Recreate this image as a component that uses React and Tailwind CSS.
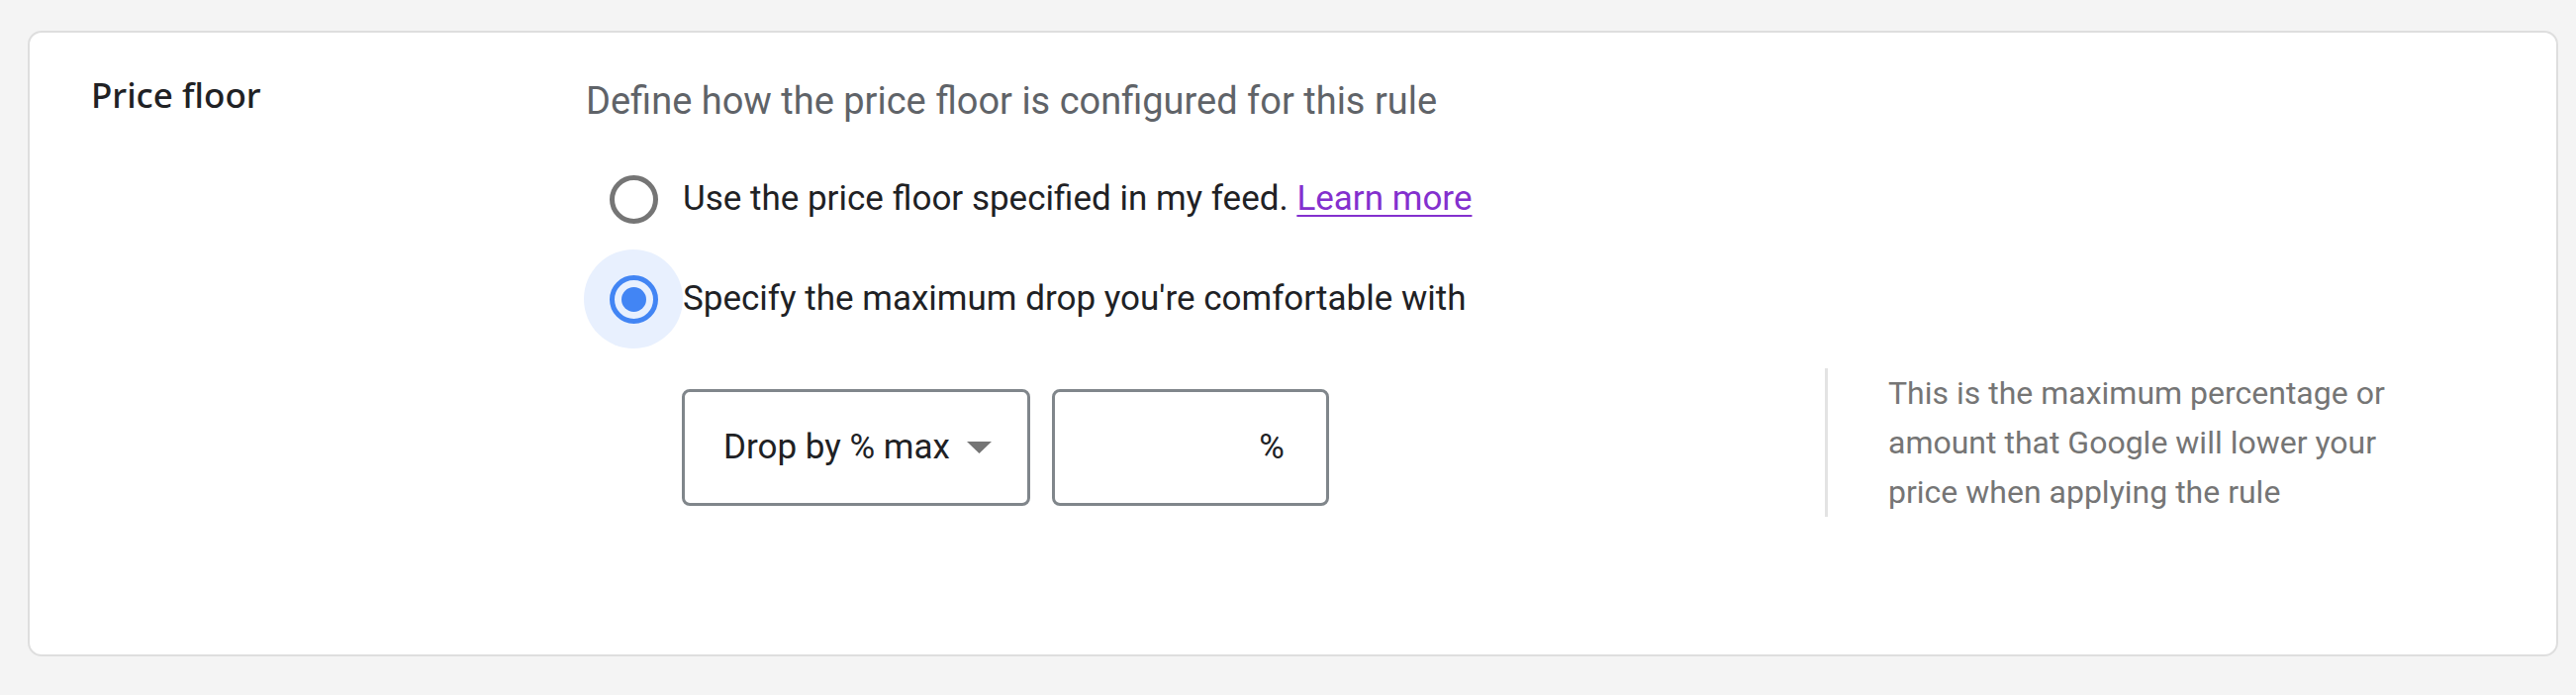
import React, { useState } from 'react';

const Radio = ({ checked, label, onClick }) => (
  <div className="flex h-[100px] items-center cursor-pointer" onClick={onClick}>
    <div
      className={`flex h-[100px] w-[100px] shrink-0 items-center justify-center rounded-full ${checked ? 'bg-[#e8f0fe]' : ''}`}
    >
      <div
        className={`flex h-[49px] w-[49px] items-center justify-center rounded-full border-[5px] ${checked ? 'border-[#4285f4]' : 'border-[#757575]'}`}
      >
        {checked && <div className="h-[25px] w-[25px] rounded-full bg-[#4285f4]" />}
      </div>
    </div>
    <div className="text-[35px] text-[#202124]">{label}</div>
  </div>
);

const App = () => {
  const [choice, setChoice] = useState('max');

  return (
    <div className="min-h-screen bg-[#f4f4f4] pl-[28px] pr-[18px] pt-[31px]" style={{ fontFamily: 'Roboto, "Liberation Sans", sans-serif' }}>
      <div className="flex h-[632px] rounded-[14px] border-2 border-[#dedede] bg-white pl-[62px] pt-[41px]">
        {/* Label column */}
        <div className="w-[500px] shrink-0">
          <div
            className="text-[35px] font-medium leading-[44px] text-[#202124]"
            style={{ fontFamily: '"Noto Sans", "Open Sans", sans-serif' }}
          >
            Price floor
          </div>
        </div>

        {/* Content column */}
        <div className="flex-1 pt-[6px]">
          <div className="text-[38px] leading-[44px] text-[#5f6368]">
            Define how the price floor is configured for this rule
          </div>

          <div className="mt-[27px] ml-[-2px] flex flex-col gap-[1px]">
            <Radio
              checked={choice === 'feed'}
              onClick={() => setChoice('feed')}
              label={
                <>
                  Use the price floor specified in my feed.{' '}
                  <a href="#" className="text-[#8430ce] underline decoration-2 underline-offset-[5px]">
                    Learn more
                  </a>
                </>
              }
            />
            <Radio
              checked={choice === 'max'}
              onClick={() => setChoice('max')}
              label="Specify the maximum drop you're comfortable with"
            />
          </div>

          <div className="mt-[20px] flex items-start pl-[97px]">
            <div className="mt-[21px] flex w-[1155px] shrink-0 gap-[22px]">
              <div className="flex h-[118px] w-[352px] items-center rounded-[8px] border-[3px] border-[#80868b] pl-[39px]">
                <span className="whitespace-nowrap text-[35px] text-[#202124]">Drop by % max</span>
                <svg className="ml-[17px] shrink-0" width="25" height="12" viewBox="0 0 25 12">
                  <path d="M0 0 L25 0 L12.5 12 Z" fill="#757575" />
                </svg>
              </div>
              <div className="flex h-[118px] w-[280px] items-center justify-end rounded-[8px] border-[3px] border-[#80868b] pr-[42px]">
                <span className="text-[35px] text-[#202124]">%</span>
              </div>
            </div>
            <div className="flex border-l-[3px] border-[#e3e3e3] pl-[61px]">
              <div className="w-[560px] text-[32px] leading-[50px] text-[#757575]">
                This is the maximum percentage or amount that Google will lower your price when applying the rule
              </div>
            </div>
          </div>
        </div>
      </div>
    </div>
  );
};

export default App;
